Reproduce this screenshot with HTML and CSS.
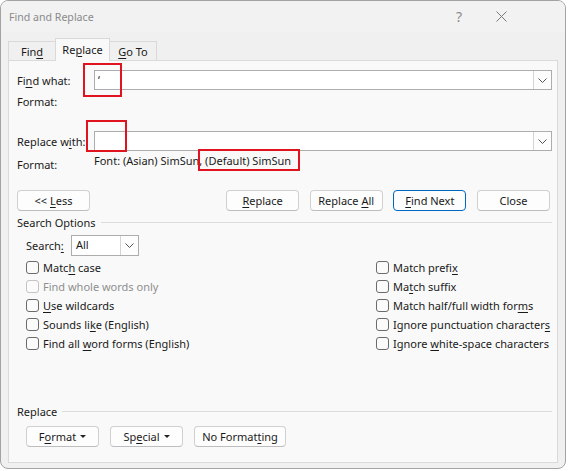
FILE: index.html
```html
<!DOCTYPE html>
<html>
<head>
<meta charset="utf-8">
<link rel="stylesheet" href="styles.css">
</head>
<body>
<div class="window">
  <div class="titlebar">
    <span class="title">Find and Replace</span>
    <span class="tb-btn help">?</span>
    <span class="tb-btn">
      <svg width="11" height="11" viewBox="0 0 11 11"><path d="M0.5 0.5 L10.5 10.5 M10.5 0.5 L0.5 10.5" stroke="#7a7a7a" stroke-width="1" fill="none"/></svg>
    </span>
  </div>

  <div class="tabs">
    <div class="tab tab-find"><span>Fin<u>d</u></span></div>
    <div class="tab tab-active"><span>Re<u>p</u>lace</span></div>
    <div class="tab tab-goto"><span><u>G</u>o To</span></div>
  </div>

  <div class="panel">
    <div class="row input-row first">
      <span class="lbl">Fi<u>n</u>d what:</span>
      <div class="combo">
        <span class="combo-val">&#x02BC;</span>
        <span class="dd"><svg width="9" height="5" viewBox="0 0 9 5"><path d="M0.5 0.5 L4.5 4.5 L8.5 0.5" stroke="#555" stroke-width="1" fill="none"/></svg></span>
      </div>
    </div>
    <div class="row fmt-row">
      <span class="lbl">Format:</span>
    </div>
    <div class="row input-row second">
      <span class="lbl">Replace w<u>i</u>th:</span>
      <div class="combo">
        <span class="combo-val"></span>
        <span class="dd"><svg width="9" height="5" viewBox="0 0 9 5"><path d="M0.5 0.5 L4.5 4.5 L8.5 0.5" stroke="#555" stroke-width="1" fill="none"/></svg></span>
      </div>
    </div>
    <div class="row fmt2-row">
      <span class="lbl fmt2-lbl">Format:</span>
      <span class="fmt2-val">Font: (Asian) SimSun, (Default) SimSun</span>
    </div>

    <div class="row btn-row">
      <button class="btn"><span>&lt;&lt; <u>L</u>ess</span></button>
      <div class="btn-group">
        <button class="btn"><span><u>R</u>eplace</span></button>
        <button class="btn"><span>Replace <u>A</u>ll</span></button>
        <button class="btn btn-focus"><span><u>F</u>ind Next</span></button>
        <button class="btn"><span>Close</span></button>
      </div>
    </div>

    <div class="row section section-search">
      <span class="section-lbl">Search Options</span>
      <span class="section-line"></span>
    </div>

    <div class="row search-row">
      <span class="search-lbl">Search<u>:</u></span>
      <div class="combo small-combo">
        <span class="combo-val">All</span>
        <span class="dd"><svg width="9" height="5" viewBox="0 0 9 5"><path d="M0.5 0.5 L4.5 4.5 L8.5 0.5" stroke="#555" stroke-width="1" fill="none"/></svg></span>
      </div>
    </div>

    <div class="options">
      <div class="col col-left">
        <div class="opt"><span class="cb"></span><span>Matc<u>h</u> case</span></div>
        <div class="opt disabled"><span class="cb"></span><span>Find whole words only</span></div>
        <div class="opt"><span class="cb"></span><span><u>U</u>se wildcards</span></div>
        <div class="opt"><span class="cb"></span><span>Sounds li<u>k</u>e (English)</span></div>
        <div class="opt"><span class="cb"></span><span>Find all <u>w</u>ord forms (English)</span></div>
      </div>
      <div class="col col-right">
        <div class="opt"><span class="cb"></span><span>Match prefi<u>x</u></span></div>
        <div class="opt"><span class="cb"></span><span>Ma<u>t</u>ch suffix</span></div>
        <div class="opt"><span class="cb"></span><span>Match half/full width for<u>m</u>s</span></div>
        <div class="opt"><span class="cb"></span><span>Ignore punctuation character<u>s</u></span></div>
        <div class="opt"><span class="cb"></span><span>Ignore <u>w</u>hite-space characters</span></div>
      </div>
    </div>

    <div class="spacer"></div>

    <div class="row section">
      <span class="section-lbl">Replace</span>
      <span class="section-line"></span>
    </div>

    <div class="row bottom-row">
      <button class="btn btn-menu"><span>F<u>o</u>rmat</span><svg width="6" height="3" viewBox="0 0 6 3"><path d="M0 0 L6 0 L3 3 Z" fill="#222"/></svg></button>
      <button class="btn btn-menu"><span>Sp<u>e</u>cial</span><svg width="6" height="3" viewBox="0 0 6 3"><path d="M0 0 L6 0 L3 3 Z" fill="#222"/></svg></button>
      <button class="btn btn-wide"><span>No Format<u>t</u>ing</span></button>
    </div>
  </div>

  <div class="mark mark1"></div>
  <div class="mark mark2"></div>
  <div class="mark mark3"></div>
</div>
</body>
</html>
```

FILE: styles.css
```css
* { box-sizing: border-box; }

html, body {
  margin: 0;
  padding: 0;
  background: #ffffff;
}

body {
  font-family: "Noto Sans", "Open Sans", sans-serif;
  font-size: 11px;
  color: #1a1a1a;
}

u { text-decoration-thickness: 1px; text-underline-offset: 2px; }

.window {
  position: relative;
  width: 566px;
  height: 469px;
  border: 1px solid #a3a3a3;
  border-radius: 8px;
  background: #f0f0f0;
  overflow: hidden;
}

.titlebar {
  height: 31px;
  display: flex;
  align-items: center;
  padding-left: 8px;
  padding-right: 43px;
  background: #f2f2f2;
}

.title {
  color: #8a8a8a;
  font-size: 10.6px;
  flex: 1;
}

.tb-btn {
  width: 42px;
  display: flex;
  justify-content: center;
  align-items: center;
  color: #8a8a8a;
}

.help { font-size: 14px; }

.tabs {
  display: flex;
  align-items: flex-end;
  margin-top: 6px;
  padding-left: 7px;
  height: 22px;
  position: relative;
  z-index: 2;
}

.tab {
  height: 19px;
  display: flex;
  align-items: center;
  justify-content: center;
  border: 1px solid #d9d9d9;
  border-bottom: none;
  background: #f0f0f0;
  white-space: nowrap;
}

.tab-find { width: 47px; border-right: none; }
.tab-goto { width: 47px; border-left: none; }

.tab-active {
  width: 55px;
  height: 23px;
  margin-bottom: -1px;
  background: #f9f9f9;
  padding-bottom: 2px;
}

.panel {
  margin-left: 7px;
  width: 550px;
  height: 403px;
  border: 1px solid #dadada;
  background: #f9f9f9;
  padding: 0 5px 0 8px;
  display: flex;
  flex-direction: column;
  position: relative;
  z-index: 1;
}

.row { display: flex; align-items: center; white-space: nowrap; }

.lbl { width: 77px; flex: none; }

.input-row { height: 20px; }
.input-row.first { margin-top: 9px; }
.input-row.second { margin-top: 19px; }

.combo {
  flex: 1;
  height: 20px;
  border: 1px solid #adadad;
  background: #ffffff;
  display: flex;
  align-items: stretch;
}

.combo-val {
  flex: 1;
  padding-left: 3px;
  line-height: 17px;
  font-size: 11px;
}

.dd {
  width: 18px;
  border-left: 1px solid #d4d4d4;
  background: #fdfdfd;
  display: flex;
  align-items: center;
  justify-content: center;
  flex: none;
}

.fmt-row { height: 22px; }

.fmt2-row { height: 24px; align-items: flex-start; }
.fmt2-lbl { padding-top: 6px; }
.fmt2-val { padding-top: 2px; }

.btn {
  height: 21px;
  width: 73px;
  padding: 0;
  border: 1px solid #d0d0d0;
  border-bottom-color: #bdbdbd;
  border-radius: 4px;
  background: #fdfdfd;
  font-family: inherit;
  font-size: 11px;
  color: #1a1a1a;
  display: flex;
  align-items: center;
  justify-content: center;
  gap: 4px;
  white-space: nowrap;
}

.btn-focus {
  border: 1px solid #0067c0;
}

.btn-row {
  margin-top: 15px;
  height: 21px;
}

.btn-group {
  margin-left: auto;
  margin-right: 2px;
  display: flex;
  gap: 10.67px;
}

.section { height: 20px; }
.section-search { height: 22px; }
.section-line {
  flex: 1;
  height: 1px;
  background: #dcdcdc;
  margin-left: 5px;
}

.search-row {
  margin-top: 2px;
  height: 21px;
  padding-left: 9px;
}

.search-lbl { width: 45px; flex: none; }

.small-combo {
  flex: none;
  width: 68px;
  height: 21px;
}

.small-combo .combo-val { font-size: 11px; line-height: 18px; padding-left: 4px; }

.options {
  display: flex;
  margin-top: 2px;
  padding-left: 9px;
}

.col { flex: none; white-space: nowrap; }
.col-left { width: 350px; }

.opt {
  height: 19px;
  display: flex;
  align-items: center;
  gap: 4px;
}

.cb {
  width: 13px;
  height: 13px;
  border: 1px solid #6b6b6b;
  border-radius: 3px;
  background: #fbfbfb;
  flex: none;
}

.opt.disabled { color: #8f8f8f; }
.opt.disabled .cb { border-color: #c4c4c4; }

.spacer { flex: 1; }

.bottom-row {
  margin-top: 5px;
  margin-bottom: 15px;
  padding-left: 9px;
  gap: 11px;
  height: 21px;
}

.btn-wide { width: 92px; }

.mark {
  position: absolute;
  border: 2px solid #e0141e;
  z-index: 5;
}

.mark1 { left: 82px; top: 62px; width: 39px; height: 34px; }
.mark2 { left: 85px; top: 119px; width: 41px; height: 32px; }
.mark3 { left: 197px; top: 148px; width: 102px; height: 22px; }
```
